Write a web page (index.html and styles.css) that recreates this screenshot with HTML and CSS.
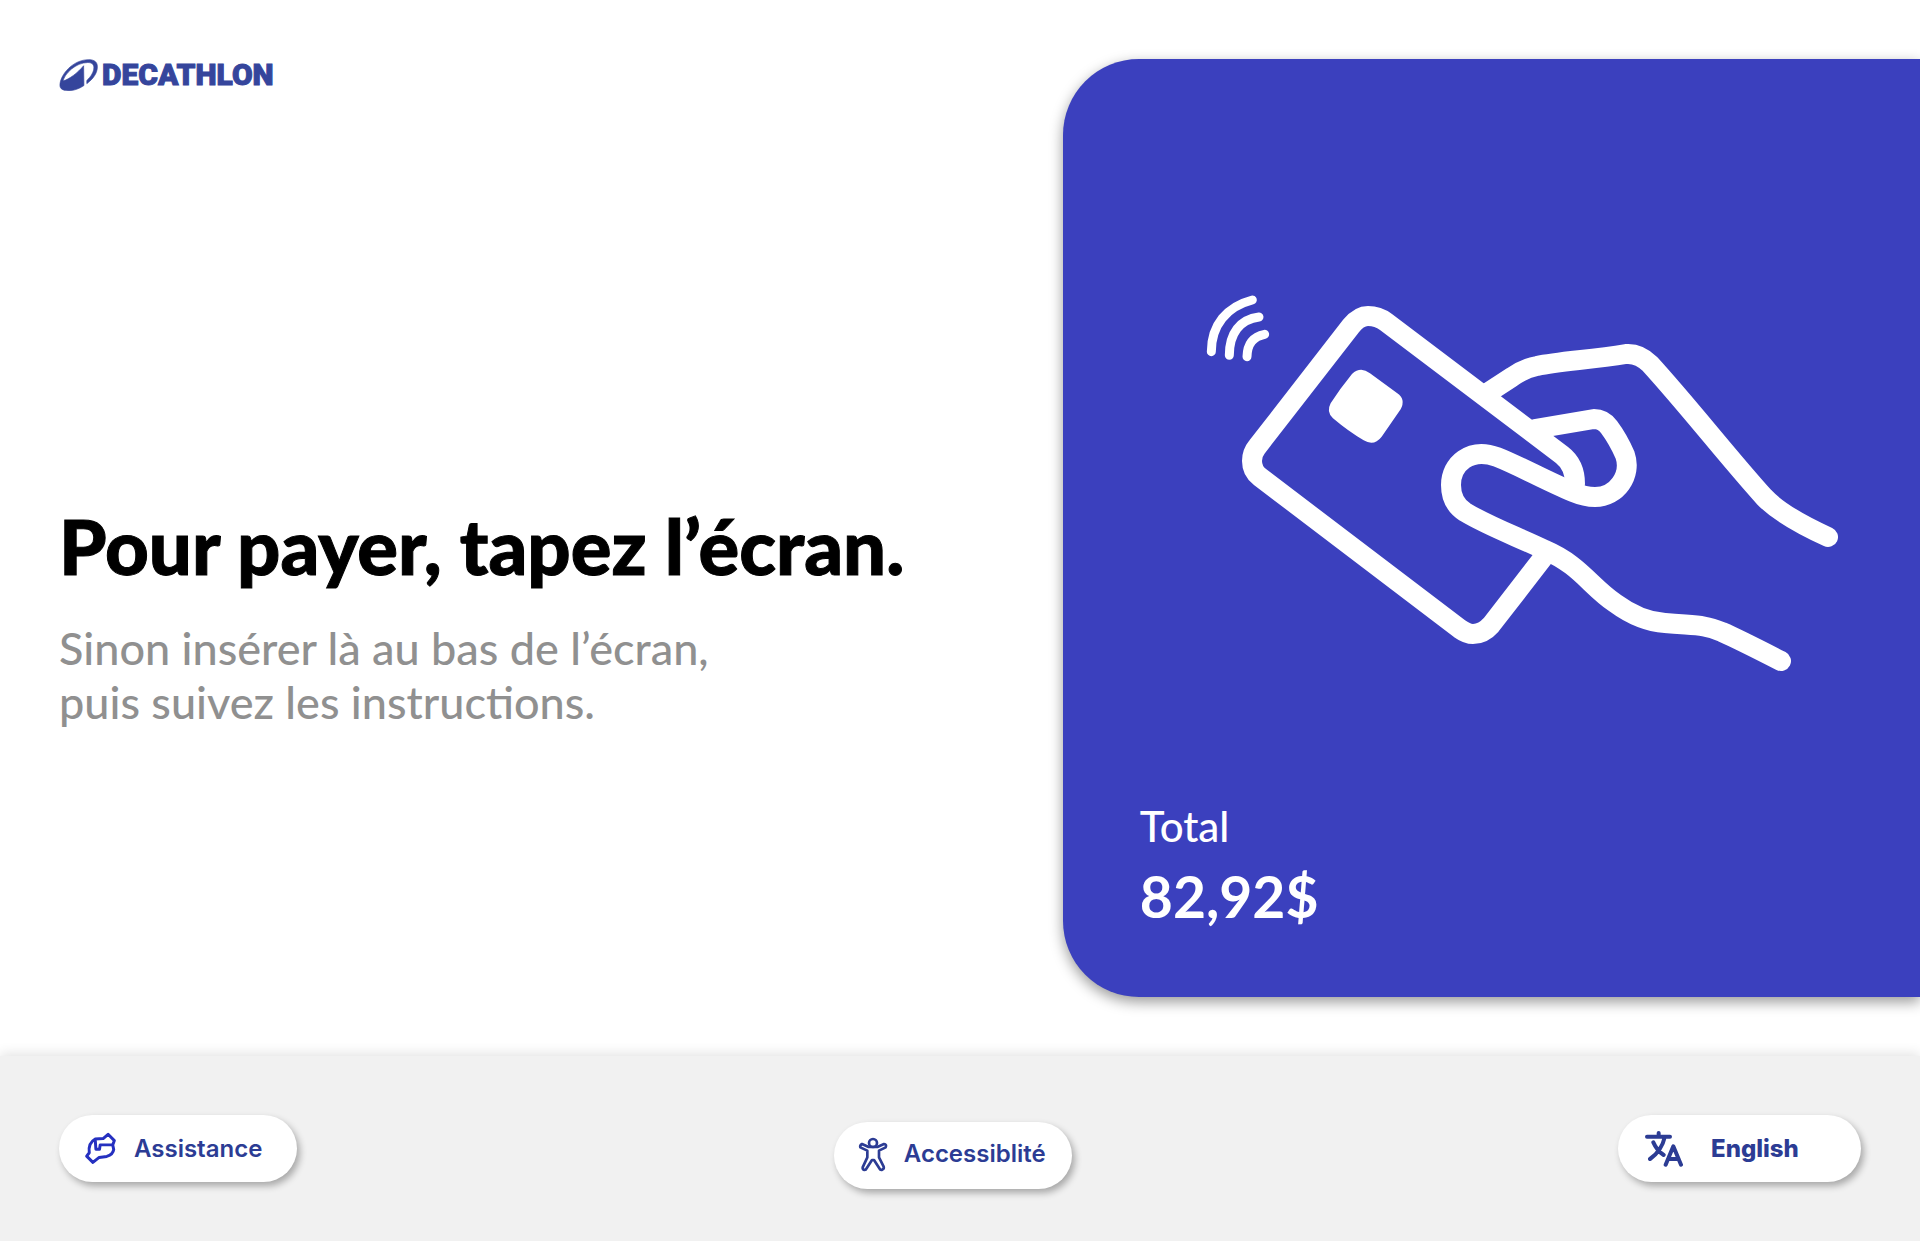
FILE: index.html
```html
<!DOCTYPE html>
<html lang="fr">
<head>
  <meta charset="utf-8">
  <meta name="viewport" content="width=device-width, initial-scale=1">
  <title>Decathlon – Paiement</title>
  <link rel="stylesheet" href="styles.css">
</head>
<body>
  <main class="main">
    <section class="intro">
      <div class="brand">
        <svg class="brand-mark" viewBox="0 0 120 100" aria-hidden="true">
          <path fill-rule="evenodd" d="M2 82C2 50 42 2 92 2C110 2 119 10 119 24C119 44 106 62 86 77L86 67C99 55 108 40 108 27C108 17 101 11 89 11C52 11 16 46 12 69C32 62 56 45 76 21L77 83C62 93 46 99 30 99C12 99 2 94 2 82Z"/>
        </svg>
        <span class="brand-name">DECATHLON</span>
      </div>
      <div class="message">
        <h1 class="title">Pour payer, tapez l’écran.</h1>
        <p class="hint">Sinon insérer là au bas de l’écran,<br>puis suivez les instructions.</p>
      </div>
    </section>

    <section class="panel">
      <svg class="art" viewBox="1190 280 660 400" role="img" aria-label="Carte sans contact">
        <g class="art-line">
          <path d="M1546 554L1491 625Q1483 634 1473 634Q1467 634 1460 629L1260 477Q1252 471 1252 461Q1252 453 1257 447L1351 326Q1359 316 1368 316Q1378 316 1386 322L1562 455Q1575 465 1575 484"/>
          <path d="M1489 392L1512 377Q1525 368 1537 366C1560 361 1590 360 1626 354Q1639 353 1650 364C1690 408 1727 456 1764 497Q1782 516 1828 537"/>
          <path d="M1535 429L1594 419Q1603 419 1609 427Q1618 439 1625 455C1632 475 1617 497 1595 497Q1585 497 1573 492C1546 481 1520 466 1497 457C1470 447 1451 464 1451 485Q1451 503 1465 512C1488 526 1518 537 1545 550C1580 565 1590 586 1615 603C1634 617 1649 622 1665 623C1697 626 1702 624 1722 632Q1738 639 1781 661"/>
        </g>
        <g transform="translate(1190 280) scale(.3333)">
          <path class="art-fill" d="M486 282Q512 258 540 280L622 340Q648 358 632 388L575 470Q552 500 521 481Q475 454 429 415Q408 396 422 370Q450 326 486 282Z"/>
          <path class="art-wave" d="M64 215C64 135 110 80 187 60M118 226C118 160 150 118 207 111M171 230C172 190 190 170 224 163"/>
        </g>
      </svg>
      <div class="total">
        <p class="total-label">Total</p>
        <p class="total-amount">82,92$</p>
      </div>
    </section>
  </main>

  <footer class="footer">
    <button class="pill pill-help" type="button">
      <svg class="icon-help" viewBox="130 272 100 100" aria-hidden="true">
        <path d="M203 279L222 298L217 311L220 325Q218 340 199 346L176 349L157 364L138 345L146 335Q142 305 164 293L188 292ZM164 294L166 324L177 324L179 311L217 311"/>
      </svg>
      Assistance
    </button>
    <button class="pill pill-access" type="button">
      <svg class="icon-access" viewBox="114 106 90 105" aria-hidden="true">
        <circle cx="159" cy="124" r="12"/>
        <path d="M126 127Q119 131 121 137L142 147V167L128 197Q127 204 134 205Q138 205 140 200L156 175H162L178 200Q181 206 187 204Q193 201 191 195L177 167V147L197 137Q201 128 192 127L172 136H146Z"/>
      </svg>
      Accessiblité
    </button>
    <button class="pill pill-lang" type="button">
      <svg class="icon-lang" viewBox="137 266 114 108" aria-hidden="true">
        <path d="M143 283H212M178 272V283M196 285Q187 325 152 350M162 300Q173 325 193 338M199 367L222 312L245 367M207 350H237"/>
      </svg>
      English
    </button>
  </footer>
</body>
</html>
```
FILE: styles.css
```css
* {
  box-sizing: border-box;
}

body {
  display: flex;
  flex-direction: column;
  min-height: 100vh;
  margin: 0;
  background: #fff;
  color: #000;
  font-family: Lato, "Liberation Sans", sans-serif;
}

h1,
p {
  margin: 0;
}

.main {
  display: grid;
  flex: 1;
  grid-template-columns: 31fr 25fr;
  padding: 59px 0;
}

.intro {
  display: flex;
  flex-direction: column;
  padding-left: 59px;
}

.brand {
  display: flex;
  align-items: center;
  gap: 4px;
  height: 32px;
  color: #35459c;
}

.brand-mark {
  width: 39px;
  height: 32px;
  fill: currentColor;
  stroke: currentColor;
  stroke-width: 2px;
}

.brand-name {
  font: 900 30px/32px Roboto, sans-serif;
  -webkit-text-stroke: 1px currentColor;
}

.message {
  display: flex;
  flex: 1;
  flex-direction: column;
  justify-content: center;
  gap: 29px;
  padding-top: 140px;
}

.title {
  font-size: 76px;
  font-weight: 900;
  line-height: 92px;
  -webkit-text-stroke: 1px currentColor;
}

.hint {
  color: #909090;
  font-size: 45px;
  font-weight: 500;
  line-height: 54px;
}

.panel {
  display: flex;
  flex-direction: column;
  justify-content: space-between;
  padding: 221px 70px 66px 77px;
  border-radius: 76px 0 0 76px;
  background: #3b40be;
  box-shadow: 0 5px 14px rgba(0, 0, 0, 0.4);
  color: #fff;
}

.art {
  align-self: flex-end;
  width: 660px;
  max-width: 100%;
}

.art-line,
.art-wave {
  fill: none;
  stroke: #fff;
  stroke-linecap: round;
  stroke-linejoin: round;
}

.art-line {
  stroke-width: 20px;
}

.art-wave {
  stroke-width: 27px;
}

.art-fill {
  fill: #fff;
}

.total {
  display: flex;
  flex-direction: column;
  gap: 8px;
}

.total-label {
  font-size: 42px;
  font-weight: 500;
  line-height: 54px;
}

.total-amount {
  font-size: 57px;
  font-weight: 700;
  line-height: 70px;
}

.footer {
  display: grid;
  grid-template-columns: 54fr auto 55fr;
  align-items: start;
  padding: 59px 59px 52px;
  background: #f1f1f1;
  box-shadow: 0 -2px 12px rgba(0, 0, 0, 0.12);
}

.pill {
  display: flex;
  align-items: center;
  width: 238px;
  height: 67px;
  padding: 0 25px;
  border: 0;
  border-radius: 34px;
  background: #fff;
  box-shadow: 3px 4px 7px rgba(0, 0, 0, 0.3);
  color: #2c3c94;
  cursor: pointer;
  font: 600 24px/32px Inter, sans-serif;
}

.pill svg {
  flex: none;
  fill: none;
  stroke: currentColor;
  stroke-linecap: round;
  stroke-linejoin: round;
}

.pill-help {
  gap: 17px;
}

.pill-access {
  gap: 15px;
  margin-top: 7px;
  padding: 0 24px 3px;
  gap: 16px;
}

.pill-lang {
  gap: 28px;
  justify-self: end;
  width: 243px;
  padding: 0 27px;
  font-weight: 800;
}

.icon-help {
  width: 33px;
  height: 33px;
  color: #2530c0;
  stroke-width: 9px;
}

.icon-access {
  width: 30px;
  height: 35px;
  stroke-width: 8px;
}

.icon-lang {
  width: 38px;
  height: 36px;
  stroke-width: 12px;
}
```
